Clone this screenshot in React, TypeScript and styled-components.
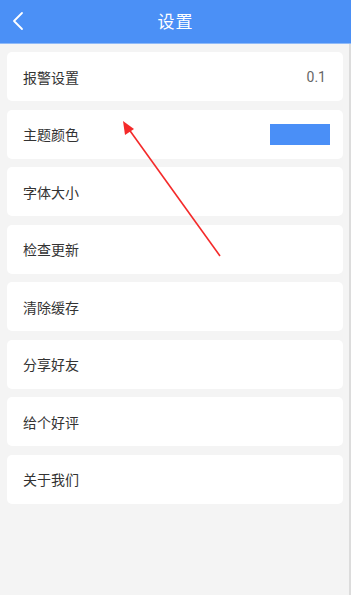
import styled, { createGlobalStyle } from "styled-components";

const GlobalStyle = createGlobalStyle`
  html, body {
    margin: 0;
    padding: 0;
    background: #f4f4f4;
  }
  body {
    font-family: "Noto Sans CJK SC", "Noto Sans", sans-serif;
  }
`;

type Item = {
  label: string;
  value?: string;
  swatch?: string;
};

const items: Item[] = [
  { label: "报警设置", value: "0.1" },
  { label: "主题颜色", swatch: "#4a8ff7" },
  { label: "字体大小" },
  { label: "检查更新" },
  { label: "清除缓存" },
  { label: "分享好友" },
  { label: "给个好评" },
  { label: "关于我们" },
];

const App = () => {
  return (
    <Page>
      <GlobalStyle />
      <Header>
        <BackButton>
          <svg width="14" height="20" viewBox="0 0 14 20">
            <path d="M11 2 L3 10 L11 18" fill="none" stroke="#fff" strokeWidth="1.8" strokeLinecap="round" strokeLinejoin="round" />
          </svg>
        </BackButton>
        <Title>设置</Title>
      </Header>
      <Body>
        <List>
          {items.map((item) => (
            <Row key={item.label}>
              <Label>{item.label}</Label>
              {item.value && <Value>{item.value}</Value>}
              {item.swatch && <Swatch $color={item.swatch} />}
            </Row>
          ))}
        </List>
        <Arrow width="351" height="240" viewBox="0 0 351 240">
          <line x1="220" y1="168" x2="128" y2="40" stroke="#f42a2a" strokeWidth="1.6" />
          <polygon points="123,33 125,47 134,41" fill="#f42a2a" />
        </Arrow>
      </Body>
    </Page>
  );
};

const Page = styled.div`
  width: 351px;
  height: 595px;
  background: #f4f4f4;
  display: flex;
  flex-direction: column;
  overflow: hidden;
`;

const Header = styled.div`
  height: 43px;
  flex-shrink: 0;
  background: #4b90f6;
  border-bottom: 1px solid #8fbaf8;
  display: flex;
  align-items: center;
  justify-content: center;
  position: relative;
`;

const BackButton = styled.div`
  position: absolute;
  left: 11px;
  top: 11px;
  display: flex;
`;

const Title = styled.div`
  color: #fff;
  font-size: 17px;
  letter-spacing: 1px;
  padding-bottom: 3px;
`;

const Body = styled.div`
  flex: 1;
  position: relative;
  border-right: 2px solid #dcdcdc;
`;

const List = styled.div`
  display: flex;
  flex-direction: column;
  gap: 8.5px;
  padding: 8px 6px 0 7px;
`;

const Row = styled.div`
  height: 49px;
  background: #fff;
  border-radius: 5px;
  display: flex;
  align-items: center;
  justify-content: space-between;
  padding: 0 13px 0 16px;
`;

const Label = styled.div`
  font-size: 14px;
  color: #333;
`;

const Value = styled.div`
  font-family: "Roboto", "Liberation Sans", sans-serif;
  font-size: 14px;
  color: #666;
  margin-right: 4px;
`;

const Swatch = styled.div<{ $color: string }>`
  width: 60px;
  height: 21px;
  background: ${(p) => p.$color};
`;

const Arrow = styled.svg`
  position: absolute;
  left: 0;
  top: 44px;
  pointer-events: none;
`;

export default App;
